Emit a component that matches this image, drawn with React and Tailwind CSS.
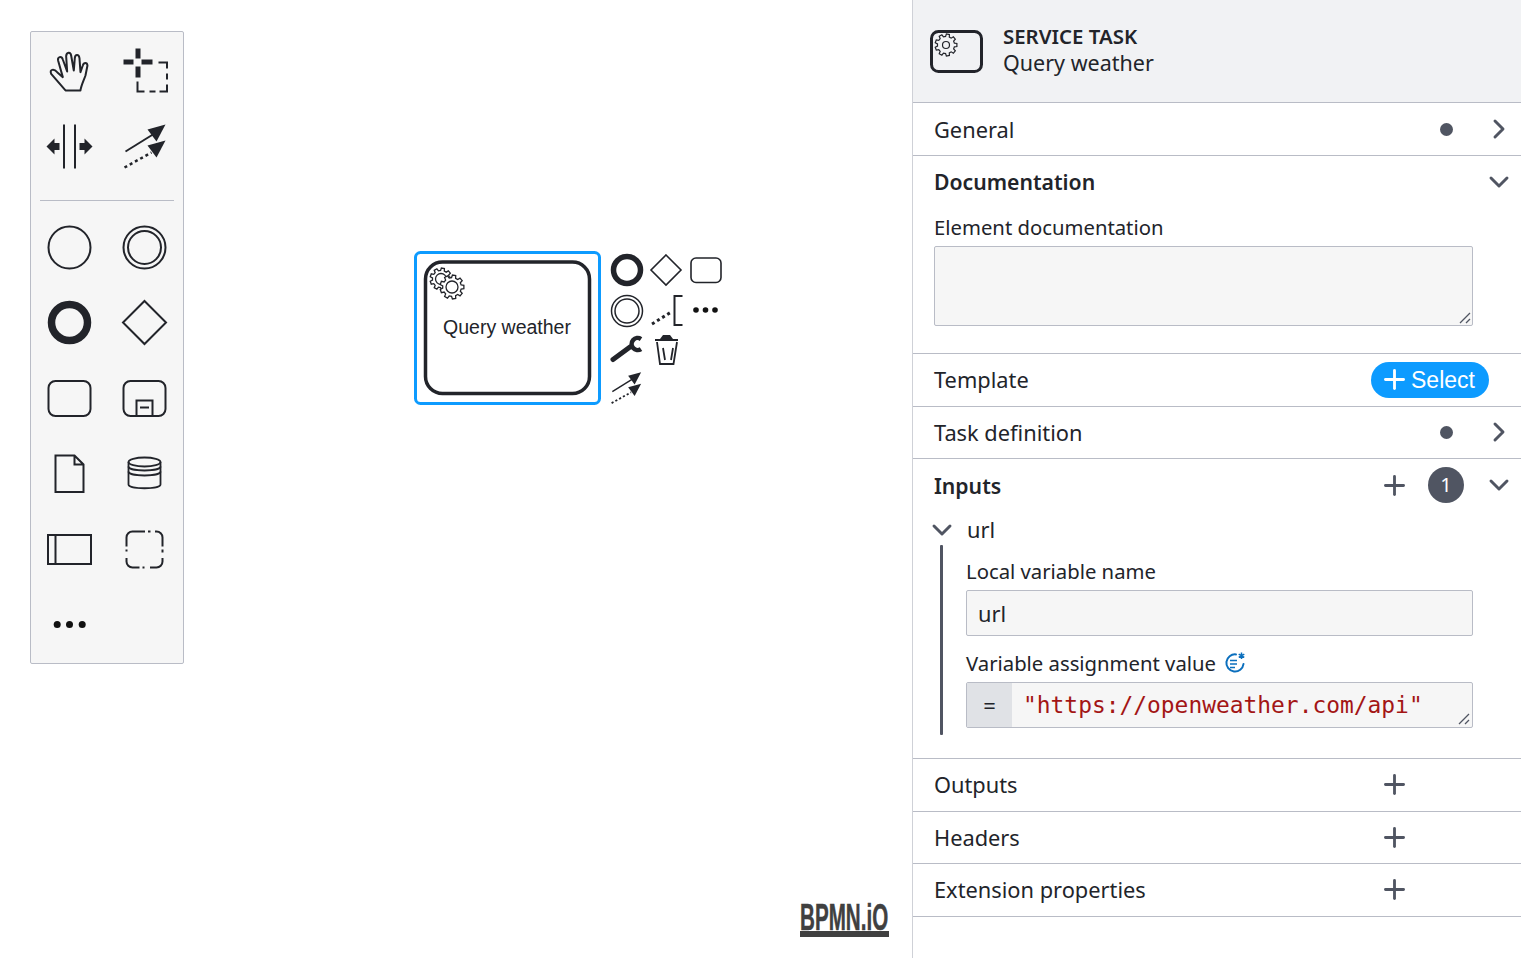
import { Plus, ChevronRight, ChevronDown } from 'lucide-react'

const ink = '#22242a'

// polygon outline of a cog, used for the service task markers
function gear(cx, cy, r, teeth = 8) {
  const pts = []
  const step = (Math.PI * 2) / teeth
  const inner = r * 0.78
  for (let i = 0; i < teeth; i++) {
    const a = i * step
    const at = (rad, off) => {
      const x = cx + rad * Math.cos(a + off * step)
      const y = cy + rad * Math.sin(a + off * step)
      pts.push(x.toFixed(2) + ' ' + y.toFixed(2))
    }
    at(inner, -0.32)
    at(r, -0.2)
    at(r, 0.2)
    at(inner, 0.32)
  }
  return 'M' + pts.join('L') + 'Z'
}

function ConnectArrows({ x = 0, y = 0, s = 1 }) {
  return (
    <g transform={`translate(${x} ${y}) scale(${s})`}>
      <path d="M-19 5 L10 -13" stroke={ink} strokeWidth="2" />
      <path d="M21 -22 L3 -17 L12 -5 Z" fill={ink} />
      <path d="M-20 21 L7 6" stroke={ink} strokeWidth="2.5" strokeDasharray="3 3" />
      <path d="M21 -6 L3 -1 L12 11 Z" fill={ink} />
    </g>
  )
}

const tools = [
  <g transform="translate(-19 -21) scale(0.333)">
    <path
      d="M45 115 L90 115 C92 100 100 85 105 70 L111 40 C110 30 100 30 97 40 L90 60 L87 18 C85 5 74 6 73 18 L70 55 L62 10 C60 -2 48 0 47 12 L50 58 L37 22 C33 10 20 14 23 26 L37 75 L20 60 C10 48 -4 52 2 65 Z"
      transform="translate(0 5)"
      fill="none"
      stroke={ink}
      strokeWidth="6"
      strokeLinejoin="round"
    />
  </g>,
  <g>
    <path d="M-9 -23 h5 v10 h-5 Z M-9 -5 h5 v11 h-5 Z M-21 -12 h10 v5 h-10 Z M-3 -12 h11 v5 h-11 Z" fill={ink} />
    <path d="M14 -9 H22.5 V-3 M22.5 2 V8 M22.5 13 V20 H15 M5 20 H11 M0 20 H-7 V10" fill="none" stroke={ink} strokeWidth="2" />
  </g>,
  <g fill={ink}>
    <path d="M-5.5 -22 V22 M5.5 -22 V22" stroke={ink} strokeWidth="2" />
    <path d="M-23 0 L-15 -8 V-3.5 H-10 V3.5 H-15 V8 Z" />
    <path d="M23 0 L15 -8 V-3.5 H10 V3.5 H15 V8 Z" />
  </g>,
  <ConnectArrows />,
]

const shapes = [
  <circle r="21" fill="none" stroke={ink} strokeWidth="2" />,
  <g fill="none" stroke={ink} strokeWidth="2">
    <circle r="21" />
    <circle r="16.5" />
  </g>,
  <circle r="18" fill="none" stroke={ink} strokeWidth="7.5" />,
  <path d="M0 -21.5 L21.5 0 L0 21.5 L-21.5 0 Z" fill="none" stroke={ink} strokeWidth="2" />,
  <rect x="-21" y="-17.5" width="42" height="35" rx="7" fill="none" stroke={ink} strokeWidth="2" />,
  <g fill="none" stroke={ink} strokeWidth="2">
    <rect x="-21" y="-17.5" width="42" height="35" rx="7" />
    <path d="M-8 17 V2 H8 V17 M-4.5 9 H4.5" />
  </g>,
  <path d="M-14 -18 H5 L14 -9 V18.5 H-14 Z M5 -18 V-9 H14" fill="none" stroke={ink} strokeWidth="2" />,
  <g fill="none" stroke={ink} strokeWidth="1.8">
    <ellipse cx="0" cy="-11.5" rx="16" ry="4.5" />
    <path d="M-16 -11.5 V11 C-16 16 16 16 16 11 V-11.5" />
    <path d="M-16 -7 C-16 -1.7 16 -1.7 16 -7 M-16 -2 C-16 3.3 16 3.3 16 -2" />
  </g>,
  <g fill="none" stroke={ink} strokeWidth="2">
    <rect x="-21.5" y="-14.5" width="43" height="29" />
    <path d="M-14 -14.5 V14.5" />
  </g>,
  <path
    d="M-18 -3 V-12 A6 6 0 0 1 -12 -18 H0.5 M3.5 -18 H6 M10.5 -18 H12 A6 6 0 0 1 18 -12 V-3 M18 0 V3 M18 8.5 V12 A6 6 0 0 1 12 18 H5.5 M-2 18 H0 M-5 18 H-12 A6 6 0 0 1 -18 12 V8.5 M-18 0 V2"
    fill="none"
    stroke={ink}
    strokeWidth="2"
  />,
  <g fill="#111">
    <circle cx="-12.3" r="3.5" />
    <circle cx="0" r="3.5" />
    <circle cx="12.7" r="3.5" />
  </g>,
]

function PaletteCell({ children, tall }) {
  return (
    <div className={`flex w-[75px] items-center ${tall ? 'h-[75.5px]' : 'h-[75px]'}`}>
      <svg width="75" height="75" viewBox="-37.5 -37.5 75 75">
        {children}
      </svg>
    </div>
  )
}

function Palette() {
  return (
    <div className="absolute left-[30px] top-[31px] h-[633px] w-[154px] rounded-[2px] border border-[#b9bcc6] bg-[#f6f6f6] pl-[0.5px] pt-[2px]">
      <div className="grid grid-cols-[75px_75px]">
        {tools.map((p, i) => (
          <PaletteCell key={i}>{p}</PaletteCell>
        ))}
      </div>
      <div className="mb-[8.25px] ml-[8px] mt-[16px] h-px w-[134px] bg-[#b9bcc6]" />
      <div className="grid grid-cols-[75px_75px]">
        {shapes.map((p, i) => (
          <PaletteCell key={i} tall>
            {p}
          </PaletteCell>
        ))}
      </div>
    </div>
  )
}

// selected task with its context pad, placed on the free canvas
function Diagram() {
  return (
    <svg className="absolute left-[400px] top-[240px]" width="340" height="180" viewBox="400 240 340 180">
      <rect x="415.5" y="252.5" width="184" height="151" rx="5" fill="none" stroke="#0d9bff" strokeWidth="3" />
      <rect x="425.5" y="262" width="164" height="131.5" rx="17" fill="#fff" stroke={ink} strokeWidth="3.5" />
      <path d={gear(441, 279, 11, 9)} fill="#fff" stroke={ink} strokeWidth="1.3" />
      <circle cx="441" cy="279" r="5.5" fill="#fff" stroke={ink} strokeWidth="1.3" />
      <path d={gear(452, 287, 12, 9)} fill="#fff" stroke={ink} strokeWidth="1.3" />
      <circle cx="452" cy="287" r="6" fill="#fff" stroke={ink} strokeWidth="1.3" />
      <text x="507" y="334" textAnchor="middle" fontSize="19.5" fill={ink} className="font-['Liberation_Sans',sans-serif]">
        Query weather
      </text>

      <circle cx="627" cy="270" r="13.5" fill="none" stroke={ink} strokeWidth="5.5" />
      <path d="M666 255 L681 270 L666 285 L651 270 Z" fill="none" stroke={ink} strokeWidth="1.6" />
      <rect x="691" y="258" width="30" height="24.5" rx="5" fill="none" stroke={ink} strokeWidth="1.6" />

      <circle cx="627" cy="311" r="15.5" fill="none" stroke={ink} strokeWidth="1.5" />
      <circle cx="627" cy="311" r="12" fill="none" stroke={ink} strokeWidth="1.5" />
      <path d="M652 324 L672 311.5" stroke={ink} strokeWidth="3" strokeDasharray="3 3" />
      <path d="M682.5 296 H674.5 V325 H682.5" fill="none" stroke={ink} strokeWidth="2" />
      <g fill="#111">
        <circle cx="696" cy="310" r="2.8" />
        <circle cx="705.5" cy="310" r="2.8" />
        <circle cx="715" cy="310" r="2.8" />
      </g>

      <path d="M613 359.5 L630 347" stroke={ink} strokeWidth="5" strokeLinecap="round" />
      <path d="M641 339 A6 6 0 1 0 641 349" fill="none" stroke={ink} strokeWidth="4.5" />
      <path d="M660 339 L663 335 H670 L673 339 Z" fill={ink} />
      <path d="M655 340 H678" stroke={ink} strokeWidth="2" />
      <path d="M657 342 L660 364 H673.5 L677 342 M663 348 L665 360 M673 348 L671 360" fill="none" stroke={ink} strokeWidth="1.8" />
      <ConnectArrows x={626} y={388} s={0.72} />
    </svg>
  )
}

function Logo() {
  return (
    <div className="absolute left-[800px] top-[903px] flex w-[89px] flex-col">
      <div className="h-[29px] origin-left scale-x-[0.557] whitespace-nowrap font-['Liberation_Sans',sans-serif] text-[37px] font-bold leading-[29px] text-[#404040] [-webkit-text-stroke:0.5px_#404040]">
        BPMN.iO
      </div>
      <div className="-mt-[1px] h-[6px] bg-[#404040]" />
    </div>
  )
}

function Chevron({ right }) {
  const Icon = right ? ChevronRight : ChevronDown
  return (
    <div className="flex w-[44px] justify-center">
      <Icon size={32} strokeWidth={2.2} color="#505562" />
    </div>
  )
}

function AddButton() {
  return (
    <div className="flex w-[42px] justify-center">
      <Plus size={31} strokeWidth={2.2} color="#505562" />
    </div>
  )
}

function Dot() {
  return (
    <div className="flex w-[62px] justify-center">
      <div className="h-[13px] w-[13px] rounded-full bg-[#505562]" />
    </div>
  )
}

function Row({ title, children }) {
  return (
    <div className="flex h-[52.5px] items-center border-b border-[#b9bcc6] pl-[21px]">
      <div className="flex-1 pt-[2px] text-[21.8px] text-[#22242a]">{title}</div>
      {children}
    </div>
  )
}

function Grip() {
  return (
    <svg className="pointer-events-none absolute bottom-[2px] right-[2px]" width="12" height="12" viewBox="0 0 12 12" stroke="#505562" strokeWidth="1.3">
      <path d="M1 11 L11 1 M7 11 L11 7" />
    </svg>
  )
}

function FeelIcon() {
  return (
    <svg width="22" height="22" viewBox="0 0 22 22" fill="none" stroke="#0b6fbd" strokeWidth="2">
      <path d="M12 2.4 A8.6 8.6 0 1 0 19.5 12" strokeLinecap="round" />
      <path d="M6 8.5 H13 M6 12 H13 M6 15.5 H11" strokeWidth="1.7" />
      <path d="M17.5 0.5 V7 M14.7 2.2 L20.3 5.3 M20.3 2.2 L14.7 5.3" strokeWidth="1.5" />
    </svg>
  )
}

function Panel() {
  return (
    <div className="w-[609px] shrink-0 border-l border-[#cfd1d7] bg-white font-['Noto_Sans',sans-serif] text-[#22242a]">
      <div className="mb-[0.5px] flex h-[103px] items-center gap-[20px] border-b border-[#b9bcc6] bg-[#f1f2f4] pl-[17px]">
        <svg width="53" height="43" viewBox="0 0 53 43" className="mt-[1px] shrink-0">
          <rect x="1.5" y="1.5" width="50" height="40" rx="7" fill="none" stroke={ink} strokeWidth="3" />
          <path d={gear(16, 15, 11, 9)} fill="none" stroke={ink} strokeWidth="1.2" />
          <circle cx="16" cy="15" r="3.5" fill="none" stroke={ink} strokeWidth="1.2" />
        </svg>
        <div className="pb-[4px] leading-[26px]">
          <div className="mb-[1px] text-[20.4px] font-semibold">SERVICE TASK</div>
          <div className="text-[21.5px]">Query weather</div>
        </div>
      </div>

      <Row title="General">
        <Dot />
        <Chevron right />
      </Row>

      <div className="h-[198px] border-b border-[#b9bcc6]">
        <div className="flex h-[52.5px] items-center pl-[21px]">
          <div className="flex-1 text-[21.2px] font-semibold">Documentation</div>
          <Chevron />
        </div>
        <div className="pl-[21px] pr-[48px]">
          <label className="block h-[37.5px] pt-[4.5px] text-[20.3px] leading-[29px]">Element documentation</label>
          <div className="relative">
            <textarea readOnly className="block h-[80px] w-full resize-none rounded-[2px] border border-[#b9bcc6] bg-[#f6f6f6]" />
            <Grip />
          </div>
        </div>
      </div>

      <Row title="Template">
        <div className="mr-[32px] flex h-[36px] w-[118px] items-center gap-[5px] rounded-full bg-[#0d9bff] pl-[12px] font-['Liberation_Sans',sans-serif] text-[23px] text-white">
          <Plus size={31} strokeWidth={2.2} className="-mx-[4px]" />
          <span>Select</span>
        </div>
      </Row>

      <Row title="Task definition">
        <Dot />
        <Chevron right />
      </Row>

      <div className="h-[300px] border-b border-[#b9bcc6]">
        <div className="flex h-[52.5px] items-center pl-[21px]">
          <div className="flex-1 pt-[2px] text-[21.2px] font-semibold">Inputs</div>
          <AddButton />
          <div className="flex w-[62px] justify-center">
            <div className="flex h-[36px] w-[36px] items-center justify-center rounded-full bg-[#505562] text-[20px] text-white">1</div>
          </div>
          <Chevron />
        </div>
        <div className="mt-[3.5px] flex h-[30px] items-center pl-[13px]">
          <ChevronDown size={32} strokeWidth={2.2} color="#505562" />
          <span className="ml-[9px] text-[21.8px]">url</span>
        </div>
        <div className="ml-[27px] flex h-[190px] pr-[48px]">
          <div className="h-full w-[3px] rounded-[1px] bg-[#505562]" />
          <div className="ml-[23px] flex-1">
            <label className="block h-[45px] pt-[11px] text-[20.3px] leading-[30px]">Local variable name</label>
            <input readOnly value="url" className="block h-[46px] w-full rounded-[2px] border border-[#b9bcc6] bg-[#f6f6f6] pl-[11px] text-[21.8px] outline-none" />
            <label className="mb-[3px] mt-[11px] flex h-[32px] items-center gap-[8px] text-[20.3px]">
              Variable assignment value
              <FeelIcon />
            </label>
            <div className="relative flex h-[46px] items-stretch rounded-[2px] border border-[#b9bcc6] bg-[#f6f6f6]">
              <div className="flex w-[45px] items-center justify-center bg-[#e0e2e6] text-[22px]">=</div>
              <div className="flex items-center pl-[11px] font-['DejaVu_Sans_Mono',monospace] text-[22.9px] text-[#a31515]">
                "https://openweather.com/api"
              </div>
              <Grip />
            </div>
          </div>
        </div>
      </div>

      <Row title="Outputs">
        <AddButton />
        <div className="w-[106px]" />
      </Row>
      <Row title="Headers">
        <AddButton />
        <div className="w-[106px]" />
      </Row>
      <Row title="Extension properties">
        <AddButton />
        <div className="w-[106px]" />
      </Row>
    </div>
  )
}

export default function App() {
  return (
    <div className="flex h-[958px] w-[1521px] overflow-hidden bg-white">
      <div className="relative flex-1">
        <Palette />
        <Diagram />
        <Logo />
      </div>
      <Panel />
    </div>
  )
}
